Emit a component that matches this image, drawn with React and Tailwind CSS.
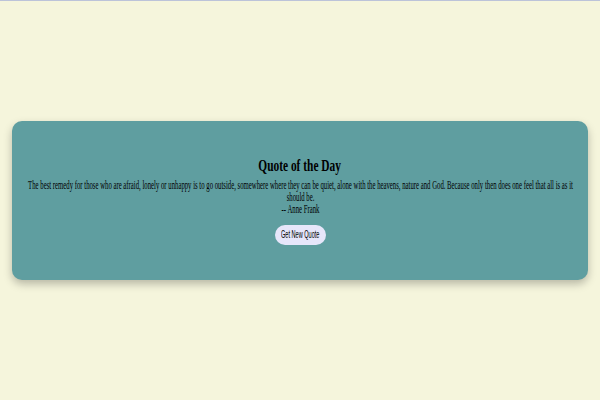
import React from 'react';

const QUOTE =
  'The best remedy for those who are afraid, lonely or unhappy is to go outside, somewhere where they can be quiet, alone with the heavens, nature and God. Because only then does one feel that all is as it should be.';

export default function App() {
  return (
    <div className="h-screen flex flex-col bg-[#f5f5dc] overflow-hidden">
      <div className="h-px bg-[#bcc3d9]" />
      <div className="flex-1 flex items-center justify-center px-3">
        {/* quote card */}
        <div
          className="w-full rounded-[10px] bg-[#5f9ea0] pt-[36px] pb-[35px] flex flex-col items-center text-black shadow-[0_4px_8px_rgba(0,0,0,0.25)]"
          style={{ fontFamily: '"Liberation Serif", "Times New Roman", serif' }}
        >
          <h2 className="text-[17px] leading-[18px] font-bold whitespace-nowrap scale-x-[0.67]">
            Quote of the Day
          </h2>
          <div className="mt-[3.5px] w-[945px] shrink-0 text-center text-[11.5px] leading-[12px] scale-x-[0.586]">
            <p>{QUOTE}</p>
            <p>-- Anne Frank</p>
          </div>
          <button
            className="mt-[9.9px] w-[51px] h-[20px] rounded-full bg-[#e6e6fa] flex items-center justify-center"
            style={{ fontFamily: '"Liberation Sans", Arial, sans-serif' }}
          >
            <span className="text-[10.5px] whitespace-nowrap scale-x-[0.53]">Get New Quote</span>
          </button>
        </div>
      </div>
    </div>
  );
}
